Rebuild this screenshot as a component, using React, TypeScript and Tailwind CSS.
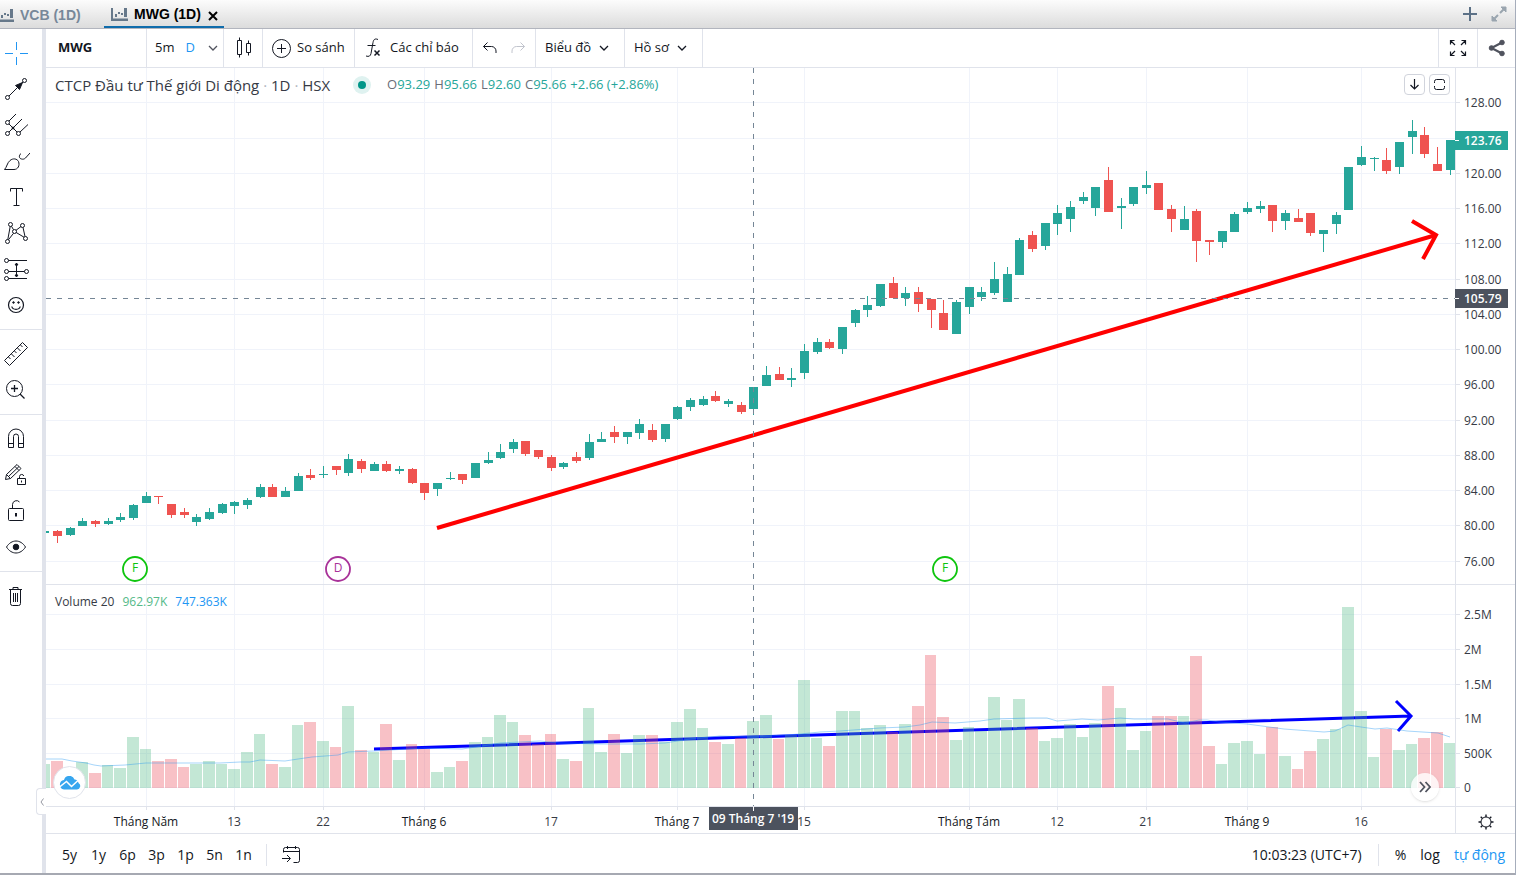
import React, { useState } from 'react';
import clsx from 'clsx';

type Candle = ['u' | 'd', number, number, number, number, number];

// direction, high, body top, body bottom, low, volume top
const candles: Candle[] = [
  ['u', 531, 531, 533, 533, 764],
  ['d', 530, 531, 536, 543, 761],
  ['u', 527, 528, 535, 536, 772],
  ['u', 518, 521, 526, 526, 762],
  ['d', 520, 521, 524, 527, 773],
  ['u', 518, 521, 524, 525, 765],
  ['u', 513, 517, 520, 522, 768],
  ['u', 504, 505, 518, 520, 737],
  ['u', 492, 496, 503, 503, 749],
  ['d', 496, 496, 497, 504, 761],
  ['d', 504, 504, 515, 518, 759],
  ['d', 508, 512, 515, 518, 767],
  ['u', 514, 517, 522, 526, 764],
  ['u', 508, 512, 519, 520, 761],
  ['u', 503, 504, 513, 514, 764],
  ['u', 501, 502, 506, 514, 769],
  ['u', 498, 500, 505, 509, 752],
  ['u', 484, 487, 497, 498, 734],
  ['d', 484, 487, 497, 497, 764],
  ['u', 487, 491, 497, 497, 767],
  ['u', 473, 476, 491, 491, 725],
  ['d', 469, 475, 478, 480, 722],
  ['u', 466, 474, 475, 478, 741],
  ['d', 466, 466, 470, 475, 747],
  ['u', 454, 459, 473, 476, 706],
  ['d', 459, 461, 469, 473, 750],
  ['u', 462, 464, 471, 471, 752],
  ['d', 461, 464, 471, 472, 724],
  ['u', 466, 469, 471, 474, 760],
  ['d', 468, 469, 483, 484, 744],
  ['d', 483, 483, 493, 500, 749],
  ['u', 483, 483, 489, 496, 772],
  ['u', 472, 478, 479, 480, 767],
  ['d', 474, 474, 480, 484, 761],
  ['u', 463, 463, 478, 478, 742],
  ['u', 452, 460, 463, 464, 737],
  ['u', 444, 452, 458, 459, 715],
  ['u', 439, 442, 449, 453, 722],
  ['d', 441, 441, 454, 456, 735],
  ['d', 450, 450, 457, 459, 744],
  ['d', 455, 457, 468, 471, 734],
  ['u', 462, 463, 467, 469, 759],
  ['d', 452, 457, 461, 463, 761],
  ['u', 434, 442, 458, 460, 708],
  ['u', 432, 439, 442, 442, 752],
  ['d', 426, 432, 437, 443, 734],
  ['u', 432, 432, 437, 444, 753],
  ['u', 419, 424, 433, 439, 735],
  ['d', 424, 430, 440, 442, 735],
  ['u', 424, 424, 439, 442, 742],
  ['u', 406, 407, 419, 420, 722],
  ['u', 398, 400, 407, 411, 709],
  ['u', 396, 399, 405, 406, 728],
  ['d', 391, 396, 401, 402, 742],
  ['u', 399, 401, 404, 407, 744],
  ['d', 402, 405, 412, 414, 738],
  ['u', 387, 387, 409, 415, 721],
  ['u', 366, 375, 386, 386, 715],
  ['d', 367, 374, 380, 380, 739],
  ['u', 368, 378, 380, 387, 735],
  ['u', 344, 351, 373, 379, 680],
  ['u', 338, 342, 352, 354, 738],
  ['d', 339, 342, 348, 349, 746],
  ['u', 327, 327, 349, 354, 711],
  ['u', 309, 310, 323, 327, 711],
  ['u', 296, 305, 310, 317, 728],
  ['u', 284, 284, 306, 307, 725],
  ['d', 277, 283, 298, 298, 732],
  ['u', 287, 293, 298, 306, 724],
  ['d', 287, 292, 304, 312, 706],
  ['d', 299, 299, 310, 328, 655],
  ['d', 300, 313, 330, 330, 717],
  ['u', 300, 302, 334, 334, 740],
  ['u', 287, 287, 307, 314, 727],
  ['u', 287, 292, 297, 301, 731],
  ['u', 262, 279, 293, 295, 697],
  ['u', 267, 274, 302, 302, 720],
  ['u', 238, 240, 275, 275, 699],
  ['d', 231, 235, 249, 252, 728],
  ['u', 223, 223, 246, 250, 741],
  ['u', 205, 213, 224, 235, 738],
  ['u', 201, 207, 219, 232, 724],
  ['u', 192, 197, 201, 204, 737],
  ['u', 187, 187, 208, 216, 723],
  ['d', 167, 180, 212, 212, 686],
  ['u', 198, 206, 208, 229, 708],
  ['u', 187, 187, 204, 206, 750],
  ['u', 171, 185, 188, 194, 731],
  ['d', 183, 183, 210, 210, 716],
  ['d', 205, 209, 219, 232, 716],
  ['u', 206, 219, 230, 230, 716],
  ['d', 209, 211, 241, 262, 656],
  ['d', 240, 240, 242, 255, 746],
  ['u', 231, 231, 242, 248, 764],
  ['u', 212, 214, 232, 232, 743],
  ['u', 202, 208, 212, 214, 741],
  ['u', 201, 206, 209, 213, 754],
  ['d', 205, 205, 221, 232, 727],
  ['u', 210, 213, 221, 230, 756],
  ['d', 209, 218, 222, 222, 769],
  ['d', 213, 213, 233, 236, 751],
  ['u', 230, 230, 234, 252, 739],
  ['u', 212, 215, 224, 234, 729],
  ['u', 167, 167, 210, 210, 607],
  ['u', 146, 157, 165, 166, 711],
  ['u', 157, 158, 159, 171, 757],
  ['d', 148, 160, 171, 174, 729],
  ['u', 142, 142, 167, 174, 750],
  ['u', 120, 131, 137, 154, 744],
  ['d', 127, 135, 154, 158, 738],
  ['d', 147, 164, 171, 171, 732],
  ['u', 140, 140, 170, 175, 743],
];

const volumeAverage =
  '46,759 62,759 72,761 86,763 94,765 101,766 125,765 146,763 220,763 240,762 250,762 260,760 285,761 298,759 312,757 338,755 348,752 374,751 424,748 462,749 476,747 500,743 540,741 560,743 600,744 640,744 665,743 690,739 720,736 753,737 800,734 820,732 840,731 880,728 905,727 920,725 932,722 955,723 980,721 994,719 1031,718 1047,718 1057,721 1082,719 1098,720 1120,718 1134,719 1168,719 1185,723 1199,720 1207,720 1219,722 1247,724 1284,729 1324,732 1335,731 1348,725 1361,727 1375,729 1387,728 1407,731 1438,733 1450,737';

const priceLevels: [number, string][] = [
  [102, '128.00'],
  [138, ''],
  [173, '120.00'],
  [208, '116.00'],
  [243, '112.00'],
  [279, '108.00'],
  [314, '104.00'],
  [349, '100.00'],
  [384, '96.00'],
  [420, '92.00'],
  [455, '88.00'],
  [490, '84.00'],
  [525, '80.00'],
  [561, '76.00'],
  [614, '2.5M'],
  [649, '2M'],
  [684, '1.5M'],
  [718, '1M'],
  [753, '500K'],
  [787, '0'],
];

const dates: [number, string][] = [
  [8, 'Tháng Năm'],
  [15, '13'],
  [22, '22'],
  [30, 'Tháng 6'],
  [40, '17'],
  [50, 'Tháng 7'],
  [60, '15'],
  [73, 'Tháng Tám'],
  [80, '12'],
  [87, '21'],
  [95, 'Tháng 9'],
  [104, '16'],
];

const events: [number, string, string][] = [
  [135, 'F', '#0ec50e'],
  [338, 'D', '#a83299'],
  [945, 'F', '#0ec50e'],
];

const barX = (index: number) => Math.floor(44.9 + index * 12.66);

const Icon = ({ children }: { children: React.ReactNode }) => (
  <svg
    width="28"
    height="28"
    viewBox="0 0 28 28"
    fill="none"
    stroke="currentColor"
    aria-hidden="true"
  >
    {children}
  </svg>
);

const Chevron = () => (
  <svg width="10" height="6" viewBox="0 0 10 6" fill="none" stroke="currentColor">
    <path d="M1 1l4 4 4-4" strokeWidth="1.3" />
  </svg>
);

const tools: { name: string; icon: React.ReactNode }[][] = [
  [
    {
      name: 'Cross',
      icon: <path stroke="#2196f3" d="M14.5 3v8M14.5 18v8M3 14.5h8M18 14.5h8" />,
    },
    {
      name: 'Trend line',
      icon: (
        <>
          <circle cx="5.5" cy="22.5" r="2" />
          <circle cx="22.5" cy="5.5" r="2" />
          <path d="M7 21L21 7" />
          <path d="M20.5 7.5l-7 3 4 4z" fill="currentColor" />
        </>
      ),
    },
    {
      name: 'Pitchfork',
      icon: (
        <>
          <circle cx="5.5" cy="11.5" r="2" />
          <circle cx="5.5" cy="22.5" r="2" />
          <circle cx="16.5" cy="22.5" r="2" />
          <path d="M7 10l7-7M7 21L20 8M18 21l8-7.5M7 13l8 8" />
          <circle cx="11" cy="17" r="1" fill="currentColor" />
        </>
      ),
    },
    {
      name: 'Brush',
      icon: (
        <>
          <path d="M2.5 22.5C5 20 5 16 8 13.500c3-2.500 7-2 8.500 1 1.500 4-.5 8-4.500 8z" />
          <path d="M19 6.500c-2.500 2-2 5 .5 5.500 1.500.5 3 0 4-1L28 6" />
        </>
      ),
    },
    {
      name: 'Text',
      icon: <path d="M8.5 8.5v-3h12v3M14.5 5.5v17M11.5 22.5h6" />,
    },
    {
      name: 'Patterns',
      icon: (
        <>
          <path d="M5.8 20.5L8.2 7.5M9.5 7.300l2 3.400M14 11.300l5-3.800M21 8.500l2 9M22 18.200l-8-4.800M11.500 14.300l-5 6.400" />
          <circle cx="5.5" cy="22.5" r="2" />
          <circle cx="8.5" cy="5.5" r="2" />
          <circle cx="12.5" cy="12.5" r="2" />
          <circle cx="20.5" cy="6.5" r="2" />
          <circle cx="23.5" cy="19.5" r="2" />
        </>
      ),
    },
    {
      name: 'Projection',
      icon: (
        <>
          <circle cx="4.5" cy="5.5" r="2" />
          <circle cx="4.5" cy="16.5" r="2" />
          <circle cx="24.5" cy="16.5" r="2" />
          <circle cx="4.5" cy="23.5" r="2" />
          <path d="M6.5 5.5H25M6.5 16.5h16M6.5 23.5H25M14.5 8v13.500" />
          <path d="M13 10l1.500-2 1.500 2zM13 20l1.500 2 1.500-2z" fill="currentColor" />
        </>
      ),
    },
    {
      name: 'Icons',
      icon: (
        <>
          <circle cx="14" cy="14" r="7.5" strokeWidth="1.2" />
          <path d="M9.800 15.500c.8 3.800 7.600 3.800 8.400 0" strokeWidth="1.2" />
          <circle cx="11.5" cy="11.5" r=".8" fill="currentColor" />
          <circle cx="16.5" cy="11.5" r=".8" fill="currentColor" />
        </>
      ),
    },
  ],
  [
    {
      name: 'Measure',
      icon: (
        <path d="M2.500 20.500L20.500 2.500l5 5-18 18zM6.500 17l2 2M9.500 14l3 3M12.500 11l2 2M15.500 8l3 3M18.500 5l2 2" />
      ),
    },
    {
      name: 'Zoom in',
      icon: (
        <>
          <circle cx="12.5" cy="12.5" r="8" />
          <path d="M12.500 9v7M9 12.500h7M18 18l4.500 4.500" strokeWidth="1.3" />
        </>
      ),
    },
  ],
  [
    {
      name: 'Magnet',
      icon: (
        <path d="M6.500 22.500V11.500a7.500 7.500 0 0 1 15 0v11h-5v-11a2.500 2.500 0 0 0-5 0v11zM6.500 18.500h5M16.500 18.500h5" />
      ),
    },
    {
      name: 'Lock drawing mode',
      icon: (
        <>
          <path d="M3.500 18.500l1-5L15 3.500l4 4L8.500 17.500zM4.500 13.500l4 4M6.500 15.500L17 5.500M13 5.500l4 4" />
          <path d="M15.500 17.500h8v6h-8zM17.500 17.500v-2a2.200 2.200 0 0 1 4.300-.5M19.500 19.500v2" />
        </>
      ),
    },
    {
      name: 'Lock all drawings',
      icon: (
        <>
          <rect x="6.5" y="11.5" width="15" height="12" rx="1" />
          <path d="M10.500 11.500v-4a4 4 0 0 1 7-2.500" />
          <path d="M14 16v3.500" strokeWidth="2" />
        </>
      ),
    },
    {
      name: 'Hide drawings',
      icon: (
        <>
          <path d="M4.500 14c5-8 14-8 19 0-5 8-14 8-19 0z" />
          <circle cx="14" cy="14" r="2.8" fill="currentColor" />
        </>
      ),
    },
  ],
  [
    {
      name: 'Remove drawings',
      icon: (
        <path d="M7 7.500h13M11 7V5.500h5V7M8.500 7.500v14a2 2 0 0 0 2 2h6a2 2 0 0 0 2-2v-14M11.500 11v9M13.500 11v9M15.500 11v9" />
      ),
    },
  ],
];

const TabIcon = () => (
  <svg width="17" height="13" viewBox="0 0 17 13" fill="#66788a" className="shrink-0">
    <path d="M0 0h2v10.500h15V13H0zM4 6h2v3H4zM7 4h2v2H7zM10 5h2v2h-2zM13 0h3v9h-3z" />
  </svg>
);

const Tabs = () => (
  <nav className="flex h-[29px] border-b border-[#b2b5be] bg-linear-to-b from-[#fcfcfc] to-[#dcdcdc] text-sm font-bold font-['Liberation_Sans',Arial,sans-serif]">
    <div className="flex w-[104px] items-center gap-[6px] overflow-hidden pt-[2px]">
      <div className="flex w-[14px] shrink-0 justify-end">
        <TabIcon />
      </div>
      <button className="whitespace-nowrap text-[#778899]">VCB (1D)</button>
    </div>
    <div className="flex h-7 w-[120px] items-center border-b-2 border-[#0f6cab] pl-[7px] pt-[2px]">
      <TabIcon />
      <button className="ml-[6px] whitespace-nowrap text-black">MWG (1D)</button>
      <button aria-label="Close MWG" className="ml-[7px] pt-[3px]">
        <svg width="10" height="10" viewBox="0 0 10 10" stroke="#000" strokeWidth="2">
          <path d="M1 1l8 8M9 1l-8 8" />
        </svg>
      </button>
    </div>
    <div className="ml-auto flex items-center gap-[14px] pr-2">
      <button aria-label="Add tab">
        <svg width="14" height="14" viewBox="0 0 14 14" stroke="#5b7086" strokeWidth="2">
          <path d="M7 0v14M0 7h14" />
        </svg>
      </button>
      <button aria-label="Expand">
        <svg width="16" height="16" viewBox="0 0 16 16" stroke="#9aa5af" strokeWidth="2" fill="#9aa5af">
          <path d="M9 7l5-5M2 14l5-5" />
          <path d="M10 1H15v5zM1 10V15h5z" strokeWidth="1" />
        </svg>
      </button>
    </div>
  </nav>
);

const cell = 'flex h-full shrink-0 items-center border-r border-[#e0e3eb]';

const Toolbar = () => (
  <div className="flex h-[39px] items-center border-b border-[#e0e3eb] text-[13px] text-[#131722]">
    <div className={clsx(cell, 'w-[101px] pl-3')}>
      <input
        aria-label="Symbol"
        defaultValue="MWG"
        className="w-20 bg-transparent font-bold outline-none"
      />
    </div>
    <div className={clsx(cell, 'w-[77px] pl-2')}>
      <button>5m</button>
      <button className="ml-[11px] text-[#2196f3]">D</button>
      <button aria-label="Intervals" className="ml-[13px] text-[#50535e]">
        <Chevron />
      </button>
    </div>
    <button aria-label="Candles" className={clsx(cell, 'w-[39px] justify-center')}>
      <Icon>
        <path d="M8.500 6.500h4v14h-4zM10.500 3.500v3M10.500 20.500v3M17.500 9.500h4v9h-4zM19.500 6.500v3M19.500 18.500v3" />
      </Icon>
    </button>
    <button className={clsx(cell, 'w-[92px] gap-[2px] pl-1')}>
      <Icon>
        <circle cx="14.5" cy="14.5" r="9" />
        <path d="M14.500 10v9M10 14.500h9" />
      </Icon>
      So sánh
    </button>
    <button className={clsx(cell, 'w-[118px] gap-[3px] pl-1')}>
      <Icon>
        <path d="M19 5.500c-3.500-1.500-4.500.5-5 3l-2 11c-.5 2.500-2 3.500-5 2.500M8.500 11.500h8" />
        <path d="M15.500 16.500l5 5M20.500 16.500l-5 5" strokeWidth="1.5" />
      </Icon>
      Các chỉ báo
    </button>
    <div className={clsx(cell, 'w-[63px] pl-[3px]')}>
      <button aria-label="Undo">
        <Icon>
          <path d="M11.500 8.500l-4 4 4 4M7.500 12.500h8a4.500 4.500 0 0 1 4.500 4.500v2" />
        </Icon>
      </button>
      <button aria-label="Redo" className="text-[#c1c4cd]">
        <Icon>
          <path d="M16.500 8.500l4 4-4 4M20.500 12.500h-8a4.500 4.500 0 0 0-4.500 4.500v2" />
        </Icon>
      </button>
    </div>
    <button className={clsx(cell, 'w-[89px] gap-2 pl-[9px]')}>
      Biểu đồ
      <Chevron />
    </button>
    <button className={clsx(cell, 'w-[78px] gap-2 pl-[9px]')}>
      Hồ sơ
      <Chevron />
    </button>
    <button
      aria-label="Fullscreen"
      className="ml-auto flex h-full w-[39px] items-center justify-center border-l border-[#e0e3eb]"
    >
      <Icon>
        <path
          d="M6.500 10.500v-4h4M6.500 6.500l4.500 4.500M17.500 6.500h4v4M21.500 6.500L17 11M6.500 17.500v4h4M6.500 21.500L11 17M17.500 21.500h4v-4M21.500 21.500L17 17"
          strokeWidth="1.2"
        />
      </Icon>
    </button>
    <button
      aria-label="Share"
      className="flex h-full w-[38px] items-center justify-center border-l border-[#e0e3eb] text-[#50535e]"
    >
      <Icon>
        <path d="M19 8.500L8.500 14 19 19.500" strokeWidth="2.2" />
        <circle cx="19" cy="8.5" r="2.3" fill="currentColor" />
        <circle cx="8.5" cy="14" r="2.3" fill="currentColor" />
        <circle cx="19" cy="19.5" r="2.3" fill="currentColor" />
      </Icon>
    </button>
  </div>
);

const Sidebar = () => (
  <aside className="relative w-[46px] shrink-0 border-r-4 border-[#e0e3eb] text-[#131722]">
    {tools.map((group, i) => (
      <div
        key={i}
        className={clsx('py-[6px]', i < tools.length - 1 && 'border-b border-[#e0e3eb]')}
      >
        {group.map((tool) => (
          <button
            key={tool.name}
            aria-label={tool.name}
            className="flex h-9 w-8 items-center justify-center"
          >
            <Icon>{tool.icon}</Icon>
          </button>
        ))}
      </div>
    ))}
    <button
      aria-label="Hide toolbar"
      className="absolute bottom-[58px] -right-1 flex h-[27px] w-[10px] items-center justify-center rounded-l border border-r-0 border-[#e0e3eb] bg-white"
    >
      <svg width="4" height="8" viewBox="0 0 4 8" fill="none" stroke="#9598a1">
        <path d="M3.500 .5L1 4l2.500 3.500" />
      </svg>
    </button>
  </aside>
);

const Plot = () => (
  <svg viewBox="46 68 1469 766" className="block h-auto w-full" role="img" aria-label="MWG">
    <defs>
      <clipPath id="plot">
        <rect x="46" y="68" width="1409" height="738" />
      </clipPath>
    </defs>
    <g fill="#f0f3fa">
      {dates.map(([index]) => (
        <rect key={index} x={barX(index)} y="68" width="1" height="738" />
      ))}
      {priceLevels.map(([y]) => (
        <rect key={y} x="46" y={y} width="1409" height="1" />
      ))}
    </g>
    <g fill="none" stroke="#0000ff" strokeWidth="3">
      <path d="M374 749L1411 716M1396 701l15 15-13 15" />
    </g>
    <g clipPath="url(#plot)">
      {candles.map(([dir, high, top, bottom, low, volume], i) => (
        <g key={i} fill={dir === 'u' ? '#26a69a' : '#ef5350'}>
          <rect x={barX(i)} y={high} width="1" height={low - high} />
          <rect x={barX(i) - 4} y={top} width="9" height={bottom - top} />
          <rect
            x={barX(i) - 6}
            y={volume}
            width={barX(i + 1) - barX(i) - 1}
            height={788 - volume}
            fill={dir === 'u' ? '#53b987' : '#eb4d5c'}
            fillOpacity="0.35"
          />
        </g>
      ))}
    </g>
    <polyline points={volumeAverage} fill="none" stroke="#2196f3" strokeOpacity="0.4" />
    <path d="M437 528L1436 235" fill="none" stroke="#ff0000" strokeWidth="4" />
    <path d="M1412 221l24 14-13 24" fill="none" stroke="#ff0000" strokeWidth="4" />

    <path
      d="M753.5 68V806M46 298.5H1455"
      stroke="#758696"
      strokeDasharray="5 6"
      fill="none"
    />

    {events.map(([x, letter, color]) => (
      <g key={x}>
        <circle cx={x} cy="569" r="12" fill="#fff" stroke={color} strokeWidth="1.8" />
        <text x={x} y="572" textAnchor="middle" fontSize="12" fill={color}>
          {letter}
        </text>
      </g>
    ))}

    {/* axes */}
    <g fill="#e0e3eb">
      <rect x="46" y="584" width="1469" height="1" />
      <rect x="46" y="806" width="1469" height="1" />
      <rect x="46" y="833" width="1469" height="1" />
      <rect x="1455" y="68" width="1" height="766" />
      {dates.map(([index]) => (
        <rect key={index} x={barX(index)} y="807" width="1" height="3" />
      ))}
      {priceLevels.map(([y]) => (
        <rect key={y} x="1456" y={y} width="4" height="1" />
      ))}
    </g>
    <g fontSize="12" fill="#363a45">
      {priceLevels.map(([y, label]) => (
        <text key={y} x="1464" y={y + 5}>
          {label}
        </text>
      ))}
      {dates.map(([index, label]) => (
        <text
          key={index}
          x={barX(index)}
          y="826"
          textAnchor="middle"
          fill={label.startsWith('T') ? '#131722' : '#363a45'}
          fontWeight={label.startsWith('T') ? 500 : 400}
        >
          {label}
        </text>
      ))}
    </g>
    <g fontSize="12" fontWeight="600" fill="#fff">
      <rect x="1455" y="131" width="53" height="19" fill="#26a69a" />
      <rect x="1455" y="140" width="4" height="1" />
      <text x="1464" y="145">123.76</text>
      <rect x="1455" y="289" width="53" height="19" fill="#4c525e" />
      <rect x="1455" y="298" width="4" height="1" />
      <text x="1464" y="303">105.79</text>
      <rect x="709" y="807" width="89" height="23" fill="#4c525e" />
      <rect x="753" y="807" width="1" height="4" />
      <text x="753" y="823" textAnchor="middle">
        09 Tháng 7 '19
      </text>
    </g>
  </svg>
);

const Legend = () => (
  <div className="absolute left-0 top-0 flex h-[34px] items-center whitespace-nowrap pl-[9px] text-[13px] text-[#26a69a]">
    <h1 className="w-[298px] text-[15px] leading-5 text-[#363a45]">
      CTCP Đầu tư Thế giới Di động <span className="text-[#b2b5be]">·</span> 1D{' '}
      <span className="text-[#b2b5be]">·</span> HSX
    </h1>
    <span className="flex size-[18px] items-center justify-center rounded-full bg-[#dff2f0]">
      <span className="size-2 rounded-full bg-[#009688]" />
    </span>
    <div className="ml-4 flex gap-1">
      <span><span className="text-[#6a6d78]">O</span>93.29</span>
      <span><span className="text-[#6a6d78]">H</span>95.66</span>
      <span><span className="text-[#6a6d78]">L</span>92.60</span>
      <span><span className="text-[#6a6d78]">C</span>95.66</span>
      <span>+2.66 (+2.86%)</span>
    </div>
  </div>
);

const paneButton =
  'flex size-[21px] items-center justify-center rounded border border-[#d1d4dc] bg-white';

const Chart = () => (
  <div className="relative text-[#131722]">
    <Plot />
    <Legend />
    <div className="absolute right-[65px] top-[6px] flex gap-1">
      <button aria-label="Move pane down" className={paneButton}>
        <svg width="11" height="11" viewBox="0 0 11 11" fill="none" stroke="currentColor" strokeWidth="1.2">
          <path d="M5.500 0v10M1.500 6l4 4 4-4" />
        </svg>
      </button>
      <button aria-label="Maximize pane" className={paneButton}>
        <svg width="11" height="11" viewBox="0 0 11 11" fill="none" stroke="currentColor">
          <path d="M.5 4V2.500a2 2 0 0 1 2-2h6a2 2 0 0 1 2 2V4M.5 7v1.500a2 2 0 0 0 2 2h6a2 2 0 0 0 2-2V7" />
        </svg>
      </button>
    </div>
    <p className="absolute left-[9px] top-[525px] flex gap-2 text-xs leading-[18px] text-[#363a45]">
      Volume 20 <span className="text-[#53b987]">962.97K</span>
      <span className="text-[#2196f3]">747.363K</span>
    </p>
    <a
      href="#about"
      aria-label="TradingView"
      className="absolute bottom-[35px] left-[7px] flex size-[33px] items-center justify-center rounded-full border border-[#e0e3eb] bg-white"
    >
      <svg width="22" height="14" viewBox="0 0 22 14">
        <path d="M5 13.500h13a3.500 3.500 0 0 0 1.500-6.500 4.500 4.500 0 0 0-4-3.500A5.500 5.500 0 0 0 5 4 4.800 4.800 0 0 0 5 13.500z" fill="#37a6ef" />
        <path d="M0 11.500l7.500-6 5 5 6.500-6" fill="none" stroke="#fff" strokeWidth="1.5" />
      </svg>
    </a>
    <button
      aria-label="Scroll to latest bar"
      className="absolute bottom-[33px] right-[76px] flex size-7 items-center justify-center rounded-full bg-white/80 text-[#50535e] shadow"
    >
      <svg width="12" height="12" viewBox="0 0 12 12" fill="none" stroke="currentColor" strokeWidth="1.8">
        <path d="M1 1l4.500 5L1 11M6.500 1L11 6l-4.500 5" />
      </svg>
    </button>
    <button aria-label="Settings" className="absolute bottom-[-2px] right-[15px]">
      <Icon>
        <circle cx="14" cy="14" r="5" />
        <path d="M14 9V6.500M14 19v2.500M9 14H6.500M19 14h2.500M10.500 10.500L8.700 8.700M17.500 17.500l1.800 1.800M17.500 10.500l1.800-1.800M10.500 17.500l-1.800 1.800" strokeWidth="1.4" />
      </Icon>
    </button>
  </div>
);

const ranges = ['5y', '1y', '6p', '3p', '1p', '5n', '1n'];

const Footer = () => {
  const [range, setRange] = useState('');

  return (
    <div className="flex h-[39px] items-center pl-[9px] pr-[10px] pt-[2px] text-sm text-[#131722]">
      {ranges.map((item) => (
        <button
          key={item}
          aria-pressed={range === item}
          onClick={() => setRange(item)}
          className="w-[29px] text-center"
        >
          {item}
        </button>
      ))}
      <div className="ml-2 h-[22px] w-px bg-[#e0e3eb]" />
      <button aria-label="Go to date" className="ml-[10px]">
        <Icon>
          <path d="M6.500 11.500v-3a2 2 0 0 1 2-2h12a2 2 0 0 1 2 2v11a2 2 0 0 1-2 2h-4M6.500 10.500h16M10.500 5v3M18.500 5v3M5 17.500h8M10 14l3.500 3.500L10 21" />
        </Icon>
      </button>
      <button className="ml-auto">10:03:23 (UTC+7)</button>
      <div className="ml-4 h-[22px] w-px bg-[#e0e3eb]" />
      <button className="ml-4">%</button>
      <button className="ml-[14px]">log</button>
      <button className="ml-[14px] text-[#2196f3]">tự động</button>
    </div>
  );
};

export default function App() {
  return (
    <div className="w-full border-r border-[#a6adbb] bg-white font-['Open_Sans','Noto_Sans',sans-serif]">
      <Tabs />
      <main className="flex border-b-2 border-[#a6a9b2]">
        <Sidebar />
        <div className="min-w-0 grow">
          <Toolbar />
          <Chart />
          <Footer />
        </div>
      </main>
    </div>
  );
}
